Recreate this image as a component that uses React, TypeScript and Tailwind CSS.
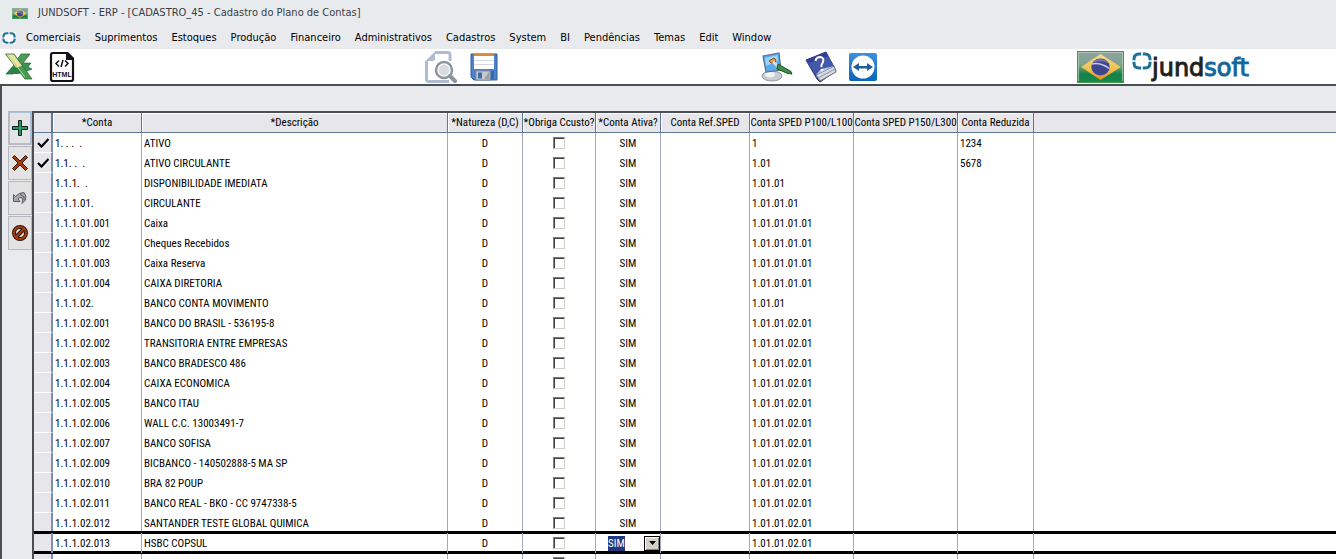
import type { ReactNode } from 'react';

type Row = {
  conta: string;
  descricao: string;
  sped: string;
  reduzida?: string;
  checked?: boolean;
  editing?: boolean;
};

const MENU = [
  'Comerciais',
  'Suprimentos',
  'Estoques',
  'Produção',
  'Financeiro',
  'Administrativos',
  'Cadastros',
  'System',
  'BI',
  'Pendências',
  'Temas',
  'Edit',
  'Window',
];

const COLUMNS = [
  { label: '*Conta', width: 'w-[89px]' },
  { label: '*Descrição', width: 'w-[306px]' },
  { label: '*Natureza (D,C)', width: 'w-[75px]' },
  { label: '*Obriga Ccusto?', width: 'w-[73px]' },
  { label: '*Conta Ativa?', width: 'w-[65px]' },
  { label: 'Conta Ref.SPED', width: 'w-[89px]' },
  { label: 'Conta SPED P100/L100', width: 'w-[104px]' },
  { label: 'Conta SPED P150/L300', width: 'w-[104px]' },
  { label: 'Conta Reduzida', width: 'w-[76px]' },
];

const ROWS: Row[] = [
  { conta: '1. . .  .', descricao: 'ATIVO', sped: '1', reduzida: '1234', checked: true },
  { conta: '1.1. .  .', descricao: 'ATIVO CIRCULANTE', sped: '1.01', reduzida: '5678', checked: true },
  { conta: '1.1.1.  .', descricao: 'DISPONIBILIDADE IMEDIATA', sped: '1.01.01' },
  { conta: '1.1.1.01.', descricao: 'CIRCULANTE', sped: '1.01.01.01' },
  { conta: '1.1.1.01.001', descricao: 'Caixa', sped: '1.01.01.01.01' },
  { conta: '1.1.1.01.002', descricao: 'Cheques Recebidos', sped: '1.01.01.01.01' },
  { conta: '1.1.1.01.003', descricao: 'Caixa Reserva', sped: '1.01.01.01.01' },
  { conta: '1.1.1.01.004', descricao: 'CAIXA DIRETORIA', sped: '1.01.01.01.01' },
  { conta: '1.1.1.02.', descricao: 'BANCO CONTA MOVIMENTO', sped: '1.01.01' },
  { conta: '1.1.1.02.001', descricao: 'BANCO DO BRASIL - 536195-8', sped: '1.01.01.02.01' },
  { conta: '1.1.1.02.002', descricao: 'TRANSITORIA ENTRE EMPRESAS', sped: '1.01.01.02.01' },
  { conta: '1.1.1.02.003', descricao: 'BANCO BRADESCO 486', sped: '1.01.01.02.01' },
  { conta: '1.1.1.02.004', descricao: 'CAIXA ECONOMICA', sped: '1.01.01.02.01' },
  { conta: '1.1.1.02.005', descricao: 'BANCO ITAU', sped: '1.01.01.02.01' },
  { conta: '1.1.1.02.006', descricao: 'WALL C.C. 13003491-7', sped: '1.01.01.02.01' },
  { conta: '1.1.1.02.007', descricao: 'BANCO SOFISA', sped: '1.01.01.02.01' },
  { conta: '1.1.1.02.009', descricao: 'BICBANCO - 140502888-5 MA SP', sped: '1.01.01.02.01' },
  { conta: '1.1.1.02.010', descricao: 'BRA 82 POUP', sped: '1.01.01.02.01' },
  { conta: '1.1.1.02.011', descricao: 'BANCO REAL - BKO - CC 9747338-5', sped: '1.01.01.02.01' },
  { conta: '1.1.1.02.012', descricao: 'SANTANDER TESTE GLOBAL QUIMICA', sped: '1.01.01.02.01' },
  { conta: '1.1.1.02.013', descricao: 'HSBC COPSUL', sped: '1.01.01.02.01', editing: true },
];

function BrazilFlag({ className }: { className: string }) {
  return (
    <svg className={className} viewBox="0 0 46 32" preserveAspectRatio="none">
      <defs>
        <linearGradient id="flagGreen" x1="0" y1="0" x2="0" y2="1">
          <stop offset="0" stopColor="#8f9fa4" />
          <stop offset="0.4" stopColor="#83a390" />
          <stop offset="0.62" stopColor="#3f8d5a" />
          <stop offset="0.75" stopColor="#138048" />
          <stop offset="1" stopColor="#1a8a50" />
        </linearGradient>
        <linearGradient id="flagYellow" x1="0" y1="0" x2="0" y2="1">
          <stop offset="0" stopColor="#f3dc90" />
          <stop offset="0.6" stopColor="#efc04c" />
          <stop offset="1" stopColor="#e88a1c" />
        </linearGradient>
      </defs>
      <rect x="0.5" y="0.5" width="45" height="31" fill="url(#flagGreen)" stroke="#3f9a4c" />
      <path d="M1.5 30V1.5H44.5V30" fill="none" stroke="#b5d8b8" strokeOpacity="0.7" />
      <path d="M23 3L43 16L23 29L4 16Z" fill="url(#flagYellow)" />
      <ellipse cx="23" cy="16" rx="9" ry="8.5" fill="#3f4590" />
      <path d="M15 12C18 6.5 28 6.5 31 12.5C26 10 20 10 15 12Z" fill="#8e93bd" opacity="0.6" />
      <path d="M14.5 13C20 11.5 27 13.5 31.5 17.5" fill="none" stroke="#c5c9e6" strokeWidth="1.6" />
    </svg>
  );
}

function RingLogo({ className }: { className: string }) {
  return (
    <svg className={className} viewBox="0 0 20 18" preserveAspectRatio="none" fill="none" stroke="#1f7196" strokeWidth="3">
      <path d="M9.2 2H7Q2 2 2 7V8.2M10.8 2H13Q18 2 18 7V8.2M9.2 16H7Q2 16 2 11V9.8M10.8 16H13Q18 16 18 11V9.8" />
    </svg>
  );
}

function ExcelIcon() {
  return (
    <svg className="h-[27px] w-[28px]" viewBox="0 0 28 27">
      <path d="M19 10H26L23 14L27 16L20 19L14 14Z" fill="#3d9153" stroke="#2d7340" strokeWidth="0.7" />
      <path d="M16 1H25L15 14L8 21H1L9 12Z" fill="#4e9c50" stroke="#2b6f3c" strokeWidth="0.8" />
      <path d="M1 21L8 14L16 15L20 20L12 21Z" fill="#2c8048" />
      <path d="M0.5 1H9L27 26H20Z" fill="#459c55" stroke="#2f7038" strokeWidth="0.8" />
      <path d="M1.5 1.5H8.5L17 13L11 14.5Z" fill="#ece4a0" />
      <path d="M3 2L20 24" stroke="#b9d68c" strokeWidth="1" />
    </svg>
  );
}

function HtmlIcon() {
  return (
    <svg className="h-[32px] w-[26px]" viewBox="0 0 26 32">
      <path d="M4 2H18L24 8V28Q24 30 22 30H4Q2 30 2 28V4Q2 2 4 2Z" fill="#fff" stroke="#141014" strokeWidth="2.2" />
      <path d="M17 1H19L25 7V9H17Z" fill="#141014" />
      <path d="M10 9.5L7 12.5L10 15.5M16 9.5L19 12.5L16 15.5M14 9L12 16" fill="none" stroke="#141014" strokeWidth="1.5" />
      <text x="13" y="26" fontSize="7" fontWeight="bold" textAnchor="middle" fontFamily="'Liberation Sans', sans-serif" fill="#141014">
        HTML
      </text>
    </svg>
  );
}

function PreviewIcon() {
  return (
    <svg className="h-[32px] w-[33px]" viewBox="0 0 33 32" fill="none">
      <path d="M10 1.5H23Q25 1.5 25 3.5V10M1.5 10V28Q1.5 30.5 4 30.5H24" stroke="#aebbd0" strokeWidth="3" />
      <path d="M0.5 10L10 0.5V8Q10 10 8 10Z" fill="#aebbd0" />
      <circle cx="19" cy="19" r="8" fill="#fff" stroke="#8b959d" strokeWidth="2.5" />
      <circle cx="19" cy="19" r="5.5" fill="#d9dbe3" />
      <path d="M25 25L30 30" stroke="#8b959d" strokeWidth="4" strokeLinecap="round" />
    </svg>
  );
}

function SaveIcon() {
  return (
    <svg className="h-[28px] w-[28px]" viewBox="0 0 28 28">
      <path d="M1 1H27V27H4L1 24Z" fill="#4c83c8" stroke="#335f9e" />
      <rect x="4" y="0.5" width="20" height="2.5" fill="#d88a34" />
      <rect x="4" y="3" width="20" height="13" fill="#fff" />
      <path d="M4 7.5H24M4 11.5H24" stroke="#d7d9e3" />
      <rect x="6" y="18" width="14" height="9" fill="#c7c9cd" stroke="#888e99" />
      <rect x="8" y="19.5" width="4" height="6" fill="#3c6cb4" />
      <path d="M14 26L19 19V26Z" fill="#9a9da3" />
      <rect x="21" y="18" width="3" height="8" fill="#3767ad" />
    </svg>
  );
}

function ThemeIcon() {
  return (
    <svg className="h-[30px] w-[32px]" viewBox="0 0 32 30">
      <ellipse cx="11" cy="24" rx="10" ry="5" fill="#c8ccd3" stroke="#9499a5" />
      <ellipse cx="9" cy="22.5" rx="5" ry="3" fill="#f1f3f6" />
      <path d="M2 4L18 1L20 18L5 20Z" fill="#58aaf0" stroke="#5e6f88" strokeWidth="1.2" />
      <path d="M4 6L16.5 3L17 9L5 14Z" fill="#9dd2fb" />
      <path d="M8 9L13 6L15 8L14 11L10 11Z" fill="#ef9d33" stroke="#8a4c22" />
      <path d="M12 10L18 15" stroke="#d5dae0" strokeWidth="3" />
      <path d="M17 12L30 19.5L31 22L27 21.5L16 17Z" fill="#3b9448" stroke="#1f4f2a" />
    </svg>
  );
}

function HelpBookIcon() {
  return (
    <svg className="h-[32px] w-[32px]" viewBox="0 0 32 32">
      <path d="M1 9L21 1L31 20L15 31L12 28Z" fill="#39499c" stroke="#262f70" />
      <path d="M11 24L29 15L31 21L15 30Z" fill="#d5d9df" stroke="#6b7386" />
      <path d="M13 27L30 18" stroke="#969ca9" />
      <path d="M1 9L21 1L29 15L11 24Z" fill="#4258a8" />
      <path d="M1 9L21 1L23 5L4 12Z" fill="#353f92" />
      <path d="M11 24L16 18L29 15Z" fill="#b9cbe0" />
      <path d="M10.5 10Q11 6 15.5 6Q20 7 17.5 12Q16 14 16.5 16" fill="none" stroke="#fff" strokeWidth="2" />
      <circle cx="17" cy="19" r="1.3" fill="#fff" />
    </svg>
  );
}

function RemoteIcon() {
  return (
    <svg className="h-[28px] w-[28px]" viewBox="0 0 28 28">
      <defs>
        <linearGradient id="remoteBlue" x1="0" y1="0" x2="0" y2="1">
          <stop offset="0" stopColor="#3f90df" />
          <stop offset="1" stopColor="#0865b8" />
        </linearGradient>
      </defs>
      <rect width="28" height="28" rx="2" fill="url(#remoteBlue)" />
      <circle cx="14" cy="14" r="11.5" fill="#fff" />
      <path d="M4 14L10 10V13H18V10L24 14L18 18V15.5H10V18Z" fill="#1c6096" />
    </svg>
  );
}

function ToolButton({ label, children }: { label: string; children: ReactNode }) {
  return (
    <button aria-label={label} className="flex shrink-0 items-center justify-center">
      {children}
    </button>
  );
}

function SideButton({ label, active, children }: { label: string; active?: boolean; children: ReactNode }) {
  return (
    <button
      aria-label={label}
      className={
        active
          ? 'flex h-[34px] w-6 items-center justify-center border border-[#b6b8bd] bg-[#e4e4e6] ring-1 ring-inset ring-[#a9c0d8]'
          : 'flex h-[34px] w-6 items-center justify-center border border-[#b6b8bd] bg-[#e3e3e4]'
      }
    >
      {children}
    </button>
  );
}

function GridRow({ row }: { row: Row }) {
  // the row being edited is framed by two heavy black lines
  const edge = row.editing
    ? 'relative shadow-[0_-2px_0_#000,0_1px_0_#000,inset_0_1px_0_#000,inset_0_-2px_0_#000]'
    : '';
  const cell = `border-r border-r-[#a0a9b8] ${edge}`;
  return (
    <tr className="h-5">
      <td className={`border-r-2 border-r-[#7d90b0] bg-[#e6e6eb] ${edge || 'border-b border-b-white'}`}>
        {row.checked && (
          <svg className="mx-auto h-[10px] w-3" viewBox="0 0 12 10" fill="none" stroke="#000" strokeWidth="2.2">
            <path d="M1 5L4.5 8.5L11.5 1" />
          </svg>
        )}
      </td>
      <td className={`pl-0.5 whitespace-pre ${cell}`}>{row.conta}</td>
      <td className={`pl-0.5 ${cell}`}>{row.descricao}</td>
      <td className={`text-center ${cell}`}>{row.conta && 'D'}</td>
      <td className={cell}>
        <input
          type="checkbox"
          aria-label={`Obriga Ccusto ${row.conta}`}
          className="mx-auto block size-3 appearance-none border border-[#d4d0c8] border-t-[#808080] border-l-[#808080] bg-white shadow-[inset_1px_1px_0_#404040]"
        />
      </td>
      <td className={`text-center ${cell}`}>
        {row.editing ? (
          <label className="flex items-center justify-between pl-3">
            <select aria-label="Conta Ativa" className="h-[15px] w-[17px] appearance-none bg-[#21397b] text-white">
              <option>SIM</option>
              <option>NÃO</option>
            </select>
            <span className="flex h-[15px] w-4 items-center justify-center border border-black bg-[#d4d0c8] shadow-[inset_1px_1px_0_#fff,inset_-1px_-1px_0_#808080]">
              <svg className="h-1 w-[7px]" viewBox="0 0 7 4">
                <path d="M0 0H7L3.5 4Z" />
              </svg>
            </span>
          </label>
        ) : (
          row.conta && 'SIM'
        )}
      </td>
      <td className={cell} />
      <td className={`pl-0.5 ${cell}`}>{row.sped}</td>
      <td className={cell} />
      <td className={`pl-0.5 ${cell}`}>{row.reduzida}</td>
      <td className={edge} />
    </tr>
  );
}

export default function App() {
  return (
    <div className="flex h-screen flex-col overflow-hidden bg-[#e9eaee] font-['DejaVu_Sans_Condensed','DejaVu_Sans',sans-serif] text-[11px] text-black">
      <header className="flex h-[26px] shrink-0 items-center gap-[10px] bg-[#e8ebee] pt-px pl-3 text-[#3c3c44]">
        <BrazilFlag className="h-[11px] w-4" />
        <h1>JUNDSOFT - ERP - [CADASTRO_45 - Cadastro do Plano de Contas]</h1>
      </header>

      <nav className="flex h-[23px] shrink-0 items-center gap-[10px] pt-px pl-0.5">
        <span className="bg-white">
          <RingLogo className="h-3 w-[14px]" />
        </span>
        <ul className="flex gap-[14px]">
          {MENU.map((item) => (
            <li key={item}>
              <a href="#">{item}</a>
            </li>
          ))}
        </ul>
      </nav>

      <div className="grid h-[35px] shrink-0 grid-cols-[420fr_336fr_316fr_259fr] items-center bg-white pl-[5px]">
        <div className="flex items-center gap-4">
          <ToolButton label="Exportar Excel">
            <ExcelIcon />
          </ToolButton>
          <ToolButton label="Exportar HTML">
            <HtmlIcon />
          </ToolButton>
        </div>
        <div className="flex items-center gap-3">
          <ToolButton label="Visualizar">
            <PreviewIcon />
          </ToolButton>
          <ToolButton label="Salvar">
            <SaveIcon />
          </ToolButton>
        </div>
        <div className="flex items-center gap-3">
          <ToolButton label="Temas">
            <ThemeIcon />
          </ToolButton>
          <ToolButton label="Ajuda">
            <HelpBookIcon />
          </ToolButton>
          <ToolButton label="Acesso remoto">
            <RemoteIcon />
          </ToolButton>
        </div>
        <div className="flex items-center gap-2">
          <BrazilFlag className="h-8 w-[47px]" />
          <div className="flex pt-[3px]">
            <RingLogo className="h-[18px] w-5" />
            <span className="font-['DejaVu_Sans',sans-serif] text-[24px] leading-8 text-[#231f20] [-webkit-text-stroke:1px]">
              jund<span className="text-[#14679a]">soft</span>
            </span>
          </div>
        </div>
      </div>

      <main className="flex min-h-0 flex-1 flex-col border-t-2 border-l-2 border-[#4b4f55]">
        <div className="h-[25px] shrink-0" />
        <div className="flex min-h-0 flex-1">
          <div className="flex w-[30px] shrink-0 flex-col gap-px pl-1.5">
            <SideButton label="Incluir" active>
              <svg className="size-4" viewBox="0 0 16 16">
                <path d="M6.5 0.5H9.5V6.5H15.5V9.5H9.5V15.5H6.5V9.5H0.5V6.5H6.5Z" fill="#1f9a62" stroke="#0d1f16" />
              </svg>
            </SideButton>
            <SideButton label="Excluir">
              <svg className="size-4" viewBox="0 0 16 16">
                <path d="M0.5 2.5L2.5 0.5L8 6L13.5 0.5L15.5 2.5L10 8L15.5 13.5L13.5 15.5L8 10L2.5 15.5L0.5 13.5L6 8Z" fill="#a83c08" stroke="#2b1408" />
              </svg>
            </SideButton>
            <SideButton label="Desfazer">
              <svg className="h-3 w-[14px]" viewBox="0 0 14 12">
                <path d="M0.5 2.5L2.5 4.5Q6 0.5 11 0.5Q14 4 12.5 8L9 11.5Q10.5 6 8 5.5Q6.5 5.5 5 7L7 9.5H0.5Z" fill="#a7aaae" stroke="#5c5a60" />
                <path d="M7 2L11 5V8" fill="none" stroke="#5c5a60" />
              </svg>
            </SideButton>
            <SideButton label="Cancelar">
              <svg className="size-4" viewBox="0 0 16 16" fill="none">
                <circle cx="8" cy="8" r="6" stroke="#2b1408" strokeWidth="4" />
                <path d="M4 12L12 4" stroke="#2b1408" strokeWidth="4" />
                <circle cx="8" cy="8" r="6" stroke="#a83c08" strokeWidth="2" />
                <path d="M4 12L12 4" stroke="#a83c08" strokeWidth="2" />
              </svg>
            </SideButton>
          </div>

          <div className="min-w-0 flex-1 overflow-hidden border-t-2 border-l-2 border-[#4b4f55] bg-white">
            <table className="w-full table-fixed border-separate border-spacing-0 font-['Roboto_Condensed','Liberation_Sans_Narrow',sans-serif] text-[11px] leading-[15px] whitespace-nowrap">
              <thead>
                <tr className="h-5">
                  <th className="w-[19px] border-r-2 border-b border-[#5f7898] bg-[#e6e6eb]" />
                  {COLUMNS.map((col) => (
                    <th
                      key={col.label}
                      className={`${col.width} border-r border-b border-[#5f7898] bg-[#e6e6eb] text-center font-normal shadow-[inset_1px_1px_0_#fff]`}
                    >
                      {col.label}
                    </th>
                  ))}
                  <th className="border-b border-[#5f7898] bg-[#e6e6eb]" />
                </tr>
              </thead>
              <tbody>
                {ROWS.map((row) => (
                  <GridRow key={row.conta} row={row} />
                ))}
                <GridRow row={{ conta: '', descricao: '', sped: '' }} />
              </tbody>
            </table>
          </div>
        </div>
      </main>
    </div>
  );
}
